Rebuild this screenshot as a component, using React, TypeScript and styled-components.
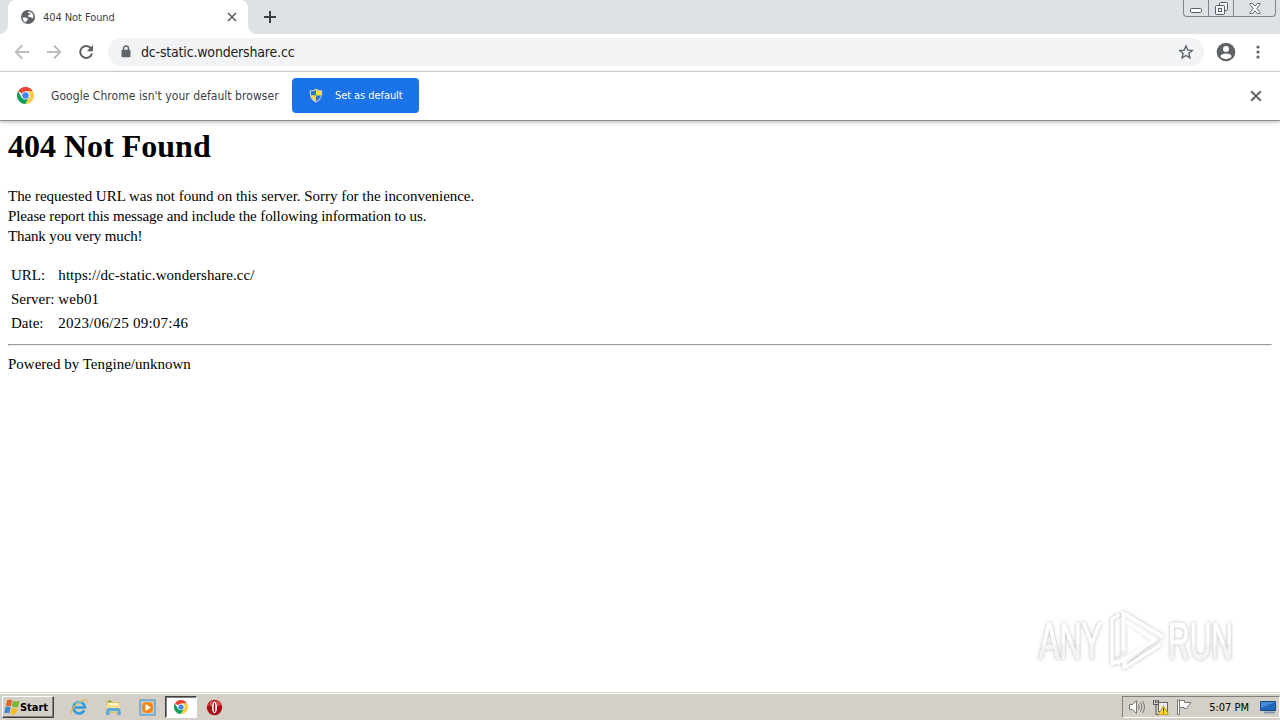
import React from "react";
import styled, { createGlobalStyle } from "styled-components";

const COLOR = {
  FRAME: "#dee1e6",
  GREY: "#5f6368",
  TEXT: "#3c4043",
  BLUE: "#1a73e8",
  TASKBAR: "#d4d0c8",
};

const info = [
  { label: "URL:", value: "https://dc-static.wondershare.cc/", spacing: "0.06px" },
  { label: "Server:", value: "web01", spacing: "0.2px" },
  { label: "Date:", value: "2023/06/25 09:07:46", spacing: "0.23px" },
];

const ChromeLogo = ({ size }: { size: number }) => (
  <svg width={size} height={size} viewBox="0 0 48 48">
    <path d="M24 24 3.2 12A24 24 0 0 1 44.8 12L24 12Z" fill="#ea4335" />
    <path d="M3.2 12A24 24 0 0 0 24 48L34.4 30 24 24 13.6 30Z" fill="#0f9d58" />
    <path d="M44.8 12A24 24 0 0 1 24 48L34.4 30A12 12 0 0 0 24 12Z" fill="#ffcd40" />
    <circle cx="24" cy="24" r="11" fill="#fff" />
    <circle cx="24" cy="24" r="9" fill="#4285f4" />
  </svg>
);

const GlobeIcon = () => (
  <svg width="16" height="16" viewBox="0 0 16 16">
    <circle cx="8" cy="8" r="7" fill={COLOR.GREY} />
    <path d="M2.6 8.4H6l1.7 1.2-.2 1.8-1.3.5v1.6A5.6 5.6 0 0 1 2.6 8.4Z" fill="#fff" />
    <path d="M8.2 2.5c3 0 5.3 2.3 5.3 5.5-.3 1-1 1.2-1.8 1l-1-.9H8.8L8 6.8l1.3-1.2h1.2V4.3H8.3Z" fill="#fff" />
  </svg>
);

const CrossIcon = ({ size, width = 1.7 }: { size: number; width?: number }) => (
  <svg width={size} height={size} viewBox="0 0 10 10" fill="none" stroke={COLOR.GREY} strokeWidth={width}>
    <path d="M1 1l8 8M9 1l-8 8" />
  </svg>
);

const ArrowIcon = ({ forward }: { forward?: boolean }) => (
  <svg width="16" height="16" viewBox="0 0 16 16" fill="none" stroke="#b9bbbe" strokeWidth="1.8">
    <path d={forward ? "M1 8h13M8 1.5 14.3 8 8 14.5" : "M15 8H2M8 1.5 1.7 8 8 14.5"} />
  </svg>
);

const ReloadIcon = () => (
  <svg width="16" height="16" viewBox="0 0 16 16">
    <path d="M13.2 4.6A6 6 0 1 0 14 9.5" fill="none" stroke={COLOR.GREY} strokeWidth="2" />
    <path d="M15 1v6.2H8.8Z" fill={COLOR.GREY} />
  </svg>
);

const LockIcon = () => (
  <svg width="10" height="13" viewBox="0 0 10 13">
    <path d="M2.5 5V3.5a2.5 2.5 0 0 1 5 0V5" fill="none" stroke={COLOR.GREY} strokeWidth="1.4" />
    <rect x="0.5" y="4.7" width="9" height="7.5" rx="1" fill={COLOR.GREY} />
  </svg>
);

const StarIcon = () => (
  <svg width="16" height="16" viewBox="0 0 16 16" fill="none" stroke={COLOR.GREY} strokeWidth="1.4">
    <path d="m8 2 1.8 4.1 4.4.4-3.3 3 1 4.3L8 11.5l-3.9 2.3 1-4.3-3.3-3 4.4-.4Z" />
  </svg>
);

const ProfileIcon = () => (
  <svg width="20" height="20" viewBox="0 0 20 20">
    <circle cx="10" cy="10" r="9.3" fill={COLOR.GREY} />
    <circle cx="10" cy="7" r="3" fill="#fff" />
    <path d="M4.3 14.2c1.2-3.6 10.2-3.6 11.4 0A7 7 0 0 1 4.3 14.2Z" fill="#fff" />
  </svg>
);

const MenuIcon = () => (
  <svg width="4" height="14" viewBox="0 0 4 14" fill={COLOR.GREY}>
    <circle cx="2" cy="2" r="1.6" />
    <circle cx="2" cy="7" r="1.6" />
    <circle cx="2" cy="12" r="1.6" />
  </svg>
);

const ShieldIcon = () => (
  <svg width="14" height="15" viewBox="0 0 14 15">
    <path d="M7 .5C5 2 3 2.2.8 2.2.3 8 2 12.5 7 14.5c5-2 6.7-6.5 6.2-12.3C11 2.2 9 2 7 .5Z" fill="#c3ccd2" />
    <path d="M7 2C5.5 3 4 3.3 2 3.3V7.5h5Z" fill="#2877ce" />
    <path d="M7 2c1.5 1 3 1.3 5 1.3V7.5H7Z" fill="#f8da36" />
    <path d="M2 7.5h5v5.7C4.2 12 2.5 10 2 7.5Z" fill="#f8da36" />
    <path d="M12 7.5H7v5.7c2.8-1.2 4.5-3.2 5-5.7Z" fill="#2877ce" />
  </svg>
);

const WindowsFlag = () => (
  <svg width="17" height="16" viewBox="0 0 17 16">
    <path d="M3.2 1.2C5 0 6.6.3 8.2 1.2L6.9 7.3C5.3 6.5 3.6 6.4 1.8 7.3Z" fill="#e7612b" />
    <path d="M9.2 1.7c1.9 1 3.8 1 6.5 0l-1.7 6c-2 1-4.3.8-6.1-.1Z" fill="#79b532" />
    <path d="M1.5 8.3c1.8-1 3.5-.8 5.1 0L5.2 14.3C3.6 13.5 2 13.4.1 14.3Z" fill="#3b87d2" />
    <path d="M7.6 8.8c1.9.9 3.9 1 6.1 0l-1.6 6c-2 1-4.2.9-6-.1Z" fill="#f4bd28" />
  </svg>
);

const ExplorerIcon = () => (
  <svg width="18" height="18" viewBox="0 0 18 18" fill="none">
    <path d="M14.2 12.3A5.7 5.7 0 1 1 14.8 9.5H5" stroke="#2f9be0" strokeWidth="2.6" />
    <path d="M1.5 16C-.5 13 6 4.5 13.5 2c3.5-1.2 4 .3 2.8 2.5" stroke="#e5b93c" strokeWidth="1.3" />
    <path d="M5 5.5a5 5 0 0 1 7-.2" stroke="#8ad3f7" />
  </svg>
);

const FolderIcon = () => (
  <svg width="17" height="17" viewBox="0 0 17 17">
    <path d="M1.5 1.5h5.5l1 1.5h7V14H1.5Z" fill="#e3c35c" />
    <path d="M3 4H14v2H3Z" fill="#fbf5cf" />
    <path d="M1.5 6h13.5v7H1.5Z" fill="#f3df8d" />
    <path d="M1.5 10.5Q2 9 3.5 9h10q1.5 0 2 1.5l.5 5.5h-3.5v-3.8h-8v3.8H1Z" fill="#5fa9d6" />
    <path d="M3.5 2.5h2.5" stroke="#43a24e" strokeWidth="1.5" />
  </svg>
);

const PlayerIcon = () => (
  <svg width="17" height="17" viewBox="0 0 17 17">
    <rect x="1" y="1" width="15" height="15" fill="#a8d3ef" stroke="#4689bb" />
    <rect x="3" y="3" width="11" height="11" fill="#f6b35f" />
    <circle cx="8.5" cy="8.5" r="5.6" fill="#f48414" />
    <path d="m6.5 5 5.5 3.5-5.5 3.5Z" fill="#fff" />
  </svg>
);

const OperaIcon = () => (
  <svg width="17" height="17" viewBox="0 0 17 17">
    <circle cx="8.5" cy="8.5" r="7.7" fill="#a80f16" />
    <path d="M2 6a7 7 0 0 1 13 0Q8 9 2 6Z" fill="#d64b4b" />
    <ellipse cx="8.5" cy="8.5" rx="2.5" ry="5.8" fill="#fff" />
    <ellipse cx="8.5" cy="8.5" rx=".8" ry="4.7" fill="#9b1117" />
  </svg>
);

const SpeakerIcon = () => (
  <svg width="18" height="16" viewBox="0 0 18 16" fill="none" stroke="#777">
    <path d="M1.5 5.5h3l4-4v13l-4-4h-3Z" fill="#fff" />
    <path d="M10.5 5.5q1.5 2.5 0 5M12.5 3.5q3 4.5 0 9M14.5 2q4 6 0 12" />
  </svg>
);

const NetworkIcon = () => (
  <svg width="17" height="17" viewBox="0 0 17 17" fill="none" stroke="#666">
    <rect x="6.5" y="3.5" width="9" height="9" fill="#eee" />
    <path d="M1.5 1v4.5h5V1M3.5 1v3M5 1v3M4 6v9.5h7" stroke="#555" />
    <path d="M11.5 6.5 16.5 15.5h-10Z" fill="#ffd829" stroke="#c7a624" />
    <path d="M11.5 9v3.5M11.5 13.5v1" stroke="#333" />
  </svg>
);

const FlagIcon = () => (
  <svg width="17" height="16" viewBox="0 0 17 16" fill="#fff" stroke="#777">
    <path d="M2.5 1v14.5h2V10M4.5 9.5V1.5h5V3.5h6.5L13.5 6.5l-2 3H9V8.500H4.500V1h-2" />
  </svg>
);

const DesktopIcon = () => (
  <svg width="16" height="14" viewBox="0 0 16 14">
    <path d="M.5 1.5h15v9H.5Z" fill="#2168bd" stroke="#174a8d" />
    <path d="M1 2h14L1 8Z" fill="#4a8bd7" />
    <path d="M4 12.5h11" stroke="#8298b0" strokeWidth="2" />
  </svg>
);

const Watermark = () => (
  <WatermarkSvg width="240" height="74" viewBox="0 0 240 74">
    <defs>
      <linearGradient id="letters" x1="0" y1="0" x2="0" y2="1">
        <stop offset="0.55" stopColor="#fff" />
        <stop offset="0.56" stopColor="#f4f4f4" />
      </linearGradient>
    </defs>
    <g fill="url(#letters)" stroke="url(#letters)" strokeWidth="1.2">
      <text x="6" y="55" textLength="63" lengthAdjust="spacingAndGlyphs">ANY</text>
      <text x="135" y="55" textLength="65" lengthAdjust="spacingAndGlyphs">RUN</text>
    </g>
    <path d="M90 8 128 31.5 91 62Z" fill="#f3f3f3" />
    <path d="M95 22v28L115 38Z" fill="#fff" />
    <g fill="none" strokeWidth="3.5" strokeLinejoin="round" strokeLinecap="round">
      <path d="M90 45V54L127 33M80 58 88 54" stroke="#f0f0f0" />
      <path d="M85 11.5 79 15V60L84 57.5M90 45V8.5L129 32M94 18 122 36 85 59M91 58.5V64L127 41" stroke="#fff" />
    </g>
  </WatermarkSvg>
);

const App = () => {
  return (
    <Screen>
      <GlobalStyle />
      <TabStrip>
        <Tab>
          <GlobeIcon />
          <TabTitle>404 Not Found</TabTitle>
          <CrossIcon size={10} />
        </Tab>
        <NewTab>
          <svg width="12" height="12" viewBox="0 0 12 12" stroke={COLOR.TEXT} strokeWidth="2">
            <path d="M6 0v12M0 6h12" />
          </svg>
        </NewTab>
        <WindowControls>
          <Control width={24}>
            <svg width="12" height="5" viewBox="0 0 12 5">
              <rect x=".5" y=".5" width="11" height="4" rx="1" fill="#fff" stroke="#555b64" />
            </svg>
          </Control>
          <Control width={25}>
            <svg width="13" height="13" viewBox="0 0 13 13" fill="#f4f5f7" stroke="#555b64">
              <rect x="4.5" y=".5" width="8" height="8" rx="1" />
              <rect x=".5" y="3.5" width="9" height="9" rx="1" />
              <rect x="3.5" y="6.5" width="3" height="3" />
            </svg>
          </Control>
          <Control width={42}>
            <svg width="12" height="11" viewBox="0 0 13 12">
              <path d="M1 .5h3l2.5 3 2.5-3h3v1L8.500 6l3.500 4.500v1H9l-2.500-3-2.500 3H1v-1L4.500 6 1 1.500Z" fill="#fff" stroke="#555b64" />
            </svg>
          </Control>
        </WindowControls>
      </TabStrip>
      <Toolbar>
        <Navigation>
          <ArrowIcon />
          <ArrowIcon forward />
          <ReloadIcon />
        </Navigation>
        <AddressBar>
          <LockIcon />
          <Address>dc-static.wondershare.cc</Address>
          <StarIcon />
        </AddressBar>
        <ProfileIcon />
        <MenuIcon />
      </Toolbar>
      <InfoBar>
        <ChromeLogo size={17} />
        <InfoMessage>Google Chrome isn't your default browser</InfoMessage>
        <DefaultBtn type="button">
          <ShieldIcon />
          <span>Set as default</span>
        </DefaultBtn>
        <CloseBtn type="button">
          <CrossIcon size={12} width={1.6} />
        </CloseBtn>
      </InfoBar>
      <Page>
        <Title>404 Not Found</Title>
        <Message>
          <Line spacing="-0.03px">The requested URL was not found on this server. Sorry for the inconvenience.</Line>
          <Line spacing="-0.11px">Please report this message and include the following information to us.</Line>
          <Line spacing="-0.13px">Thank you very much!</Line>
        </Message>
        <InfoTable>
          <tbody>
            {info.map((row) => (
              <tr key={row.label}>
                <Cell>{row.label}</Cell>
                <Cell spacing={row.spacing}>{row.value}</Cell>
              </tr>
            ))}
          </tbody>
        </InfoTable>
        <Divider />
        <Line>Powered by Tengine/unknown</Line>
        <Watermark />
      </Page>
      <Taskbar>
        <StartBtn type="button">
          <WindowsFlag />
          <span>Start</span>
        </StartBtn>
        <QuickLaunch>
          <TaskItem><ExplorerIcon /></TaskItem>
          <TaskItem><FolderIcon /></TaskItem>
          <TaskItem><PlayerIcon /></TaskItem>
          <TaskItem active><ChromeLogo size={14} /></TaskItem>
          <TaskItem><OperaIcon /></TaskItem>
        </QuickLaunch>
        <Tray>
          <SpeakerIcon />
          <NetworkIcon />
          <FlagIcon />
          <Clock>5:07 PM</Clock>
          <DesktopIcon />
        </Tray>
      </Taskbar>
    </Screen>
  );
};

const GlobalStyle = createGlobalStyle`
  * {
    box-sizing: border-box;
  }
  body {
    margin: 0;
    overflow: hidden;
  }
  svg {
    display: block;
    flex: none;
  }
`;

const Screen = styled.div`
  display: flex;
  flex-direction: column;
  width: 1280px;
  height: 720px;
  background: #fff;
  color: ${COLOR.TEXT};
  font: 11px "DejaVu Sans Condensed", "Noto Sans", sans-serif;
`;

const TabStrip = styled.div`
  display: flex;
  height: 34px;
  padding-left: 8px;
  background: ${COLOR.FRAME};
`;

const Tab = styled.div`
  position: relative;
  display: flex;
  align-items: center;
  width: 240px;
  padding: 0 11px 0 12px;
  border-radius: 8px 8px 0 0;
  background: #fff;

  &::before,
  &::after {
    content: "";
    position: absolute;
    bottom: 0;
    width: 8px;
    height: 8px;
  }
  &::before {
    left: -8px;
    background: radial-gradient(circle at 0 0, transparent 7.5px, #fff 8px);
  }
  &::after {
    right: -8px;
    background: radial-gradient(circle at 100% 0, transparent 7.5px, #fff 8px);
  }
`;

const TabTitle = styled.div`
  flex: 1;
  margin-left: 7px;
  letter-spacing: -0.07px;
`;

const NewTab = styled.div`
  display: flex;
  align-items: center;
  margin-left: 16px;
`;

const WindowControls = styled.div`
  display: flex;
  height: 17px;
  margin: 0 4px 0 auto;
  border: 1px solid #80868f;
  border-top: none;
  border-radius: 0 0 4px 4px;
`;

const Control = styled.div<{ width: number }>`
  display: flex;
  align-items: ${(props) => (props.width < 40 ? "flex-end" : "center")};
  justify-content: center;
  width: ${(props) => props.width}px;
  padding-bottom: ${(props) => (props.width === 24 ? "3px" : props.width === 25 ? "1px" : "0")};

  & + & {
    border-left: 1px solid #80868f;
  }
`;

const Toolbar = styled.div`
  display: flex;
  align-items: center;
  height: 38px;
  padding: 0 20px 2px 14px;
  border-bottom: 1px solid #dadce0;
`;

const Navigation = styled.div`
  display: flex;
  gap: 16px;
  width: 94px;
`;

const AddressBar = styled.div`
  display: flex;
  align-items: center;
  width: 1096px;
  height: 28px;
  margin-right: 12px;
  padding: 0 10px 0 13px;
  border-radius: 14px;
  background: #f1f3f4;

  & + svg {
    margin-right: 20px;
  }
`;

const Address = styled.div`
  flex: 1;
  margin-left: 10px;
  color: #202124;
  font-size: 14px;
  letter-spacing: -0.18px;
`;

const InfoBar = styled.div`
  position: relative;
  display: flex;
  align-items: center;
  height: 49px;
  padding: 0 18px 1px 17px;
  border-bottom: 1px solid #8f8f8f;
  box-shadow: 0 1px 4px rgba(0, 0, 0, 0.3);
`;

const InfoMessage = styled.div`
  width: 241px;
  margin-left: 17px;
  font-size: 12px;
  letter-spacing: 0.05px;
  white-space: nowrap;
`;

const DefaultBtn = styled.button`
  display: flex;
  align-items: center;
  gap: 12px;
  width: 127px;
  height: 35px;
  padding: 0 0 0 17px;
  border: none;
  border-radius: 4px;
  background: ${COLOR.BLUE};
  color: #fff;
  font: inherit;
  letter-spacing: -0.07px;
  white-space: nowrap;
`;

const CloseBtn = styled.button`
  margin-left: auto;
  padding: 0;
  border: none;
  background: transparent;
`;

const Page = styled.main`
  position: relative;
  flex: 1;
  padding: 7px 8px 0;
  color: #000;
  font: 15px/20px "Liberation Serif", serif;
`;

const Title = styled.h1`
  margin: 0;
  font-size: 32px;
  line-height: 36px;
`;

const Message = styled.div`
  margin: 22px 0 16px;
`;

const Line = styled.div<{ spacing?: string }>`
  letter-spacing: ${(props) => props.spacing || "normal"};
`;

const InfoTable = styled.table`
  border-spacing: 2px;
`;

const Cell = styled.td<{ spacing?: string }>`
  padding: 1px;
  letter-spacing: ${(props) => props.spacing || "normal"};
`;

const Divider = styled.hr`
  margin: 8px 0;
`;

const WatermarkSvg = styled.svg`
  position: absolute;
  right: 7px;
  bottom: 14px;
  overflow: visible;
  font: 52px "Liberation Sans", sans-serif;
  filter: drop-shadow(0 0 1.5px rgba(0, 0, 0, 0.22)) drop-shadow(0 0 2px rgba(0, 0, 0, 0.08));
`;

const Taskbar = styled.footer`
  display: flex;
  height: 28px;
  padding: 3px 0 1px 2px;
  border-top: 1px solid ${COLOR.TASKBAR};
  background: ${COLOR.TASKBAR};
  box-shadow: inset 0 1px #fff;
`;

const StartBtn = styled.button`
  display: flex;
  align-items: center;
  width: 52px;
  height: 22px;
  padding: 0 0 0 1px;
  border: 1px solid;
  border-color: #fff #404040 #404040 #fff;
  background: ${COLOR.TASKBAR};
  box-shadow: inset -1px -1px #808080;
  color: #000;
  font: bold 11px "DejaVu Sans Condensed", sans-serif;
  letter-spacing: -0.05px;

  & > span {
    margin-left: -1px;
  }
`;

const QuickLaunch = styled.div`
  display: flex;
  margin-left: 9px;
  gap: 2px;
`;

const TaskItem = styled.div<{ active?: boolean }>`
  display: flex;
  align-items: center;
  justify-content: center;
  width: 32px;
  height: 22px;
  border: 1px solid transparent;
  ${(props) => props.active && "border-color: #404040 #fff #fff #404040; background: #fff; box-shadow: inset 1px 1px #808080;"}

  &:last-child {
    width: 30px;
  }
`;

const Tray = styled.div`
  display: flex;
  align-items: center;
  gap: 6px;
  height: 22px;
  width: 158px;
  margin-left: auto;
  padding: 0 3px 0 5px;
  border: 1px solid;
  border-color: #808080 #fff #fff #808080;
`;

const Clock = styled.div`
  flex: 1;
  padding-right: 5px;
  color: #000;
  text-align: right;
  white-space: nowrap;
`;

export default App;
